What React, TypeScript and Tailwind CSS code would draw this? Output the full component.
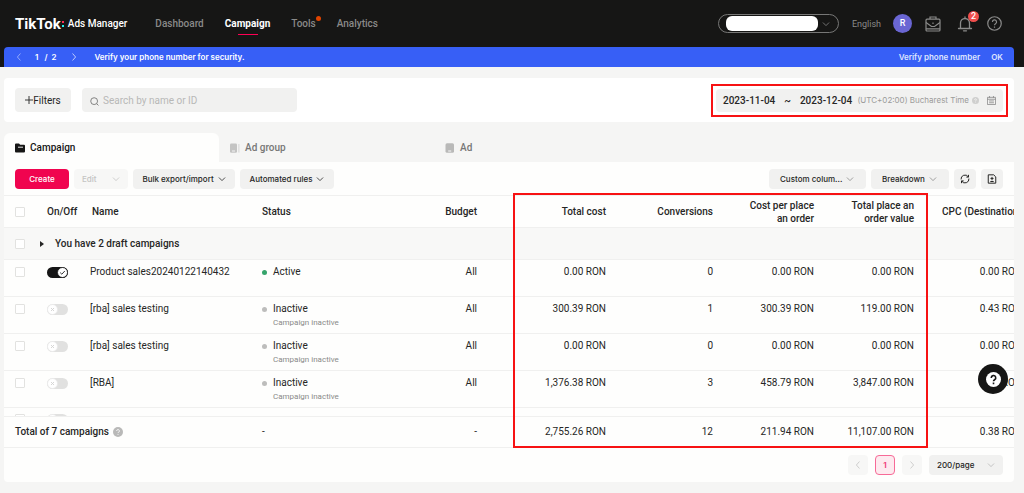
/**
 * Campaign list — the Ads Manager landing view.
 *
 * Top bar, verification banner, filter card, then the tabbed campaign
 * table with its pinned totals row and pagination.
 */

import React, { useState } from "react";

type Campaign = {
  id: number;
  name: string;
  active: boolean;
  values: string[];
};

const NAV = [
  { label: "Dashboard" },
  { label: "Campaign", current: true },
  { label: "Tools", dot: true },
  { label: "Analytics" },
];

// budget, total cost, conversions, cost per order, order value, CPC
const CAMPAIGNS: Campaign[] = [
  {
    id: 1,
    name: "Product sales20240122140432",
    active: true,
    values: ["All", "0.00 RON", "0", "0.00 RON", "0.00 RON", "0.00 RON"],
  },
  {
    id: 2,
    name: "[rba] sales testing",
    active: false,
    values: ["All", "300.39 RON", "1", "300.39 RON", "119.00 RON", "0.43 RON"],
  },
  {
    id: 3,
    name: "[rba] sales testing",
    active: false,
    values: ["All", "0.00 RON", "0", "0.00 RON", "0.00 RON", "0.00 RON"],
  },
  {
    id: 4,
    name: "[RBA]",
    active: false,
    values: ["All", "1,376.38 RON", "3", "458.79 RON", "3,847.00 RON", "0.38 RON"],
  },
];

const TOTALS = ["-", "2,755.26 RON", "12", "211.94 RON", "11,107.00 RON", "0.38 RON"];

function Chevron({ dir = "down", className = "" }: { dir?: "down" | "left" | "right"; className?: string }) {
  const d = { down: "M1.5 3.5 5 7l3.5-3.5", left: "M6.5 1 3 5l3.5 4", right: "M3.5 1 7 5 3.5 9" }[dir];
  return (
    <svg viewBox="0 0 10 10" fill="none" stroke="currentColor" className={`size-2 shrink-0 ${className}`} aria-hidden>
      <path d={d} strokeLinecap="round" strokeLinejoin="round" />
    </svg>
  );
}

function HelpDot({ className = "" }: { className?: string }) {
  return (
    <svg viewBox="0 0 16 16" className={`shrink-0 ${className}`} aria-hidden>
      <circle cx="8" cy="8" r="8" fill="currentColor" />
      <path d="M5.8 6.3a2.2 2.2 0 1 1 3.3 1.9c-.7.4-1.1.7-1.1 1.5M8 11.2v1.3" fill="none" stroke="#fff" strokeWidth="1.4" />
    </svg>
  );
}

function Checkbox({ label }: { label: string }) {
  return (
    <input
      type="checkbox"
      aria-label={label}
      className="block size-2.5 appearance-none rounded-[1px] border border-[#e2e2e0] bg-white checked:bg-[#161616]"
    />
  );
}

function Toggle({ label, initial }: { label: string; initial: boolean }) {
  const [on, setOn] = useState(initial);
  return (
    <label className={`flex h-[11px] w-[21px] items-center rounded-full ${on ? "justify-end bg-[#161616]" : "bg-[#e1e1e0]"}`}>
      <input type="checkbox" className="sr-only" aria-label={label} checked={on} onChange={() => setOn(!on)} />
      <svg viewBox="0 0 11 11" className="size-[11px]" fill="none" aria-hidden>
        <circle cx="5.5" cy="5.5" r="5" fill="#fff" stroke={on ? "#161616" : "#e9e9e8"} strokeWidth="0.8" />
        {on ? (
          <path d="m3.2 5.6 1.6 1.6 3-3.2" stroke="#333" />
        ) : (
          <path d="m4 4 3 3M7 4 4 7" stroke="#d2d2d1" strokeWidth="0.9" />
        )}
      </svg>
    </label>
  );
}

function TopBar() {
  return (
    <header className="flex h-[47px] items-center pr-[22px] pl-[15px] text-[#8a8a89]">
      <div className="flex items-center text-white">
        <span className="text-[15px] leading-4 font-bold">TikTok</span>
        <span className="mr-1 ml-px flex flex-col gap-[2px]">
          <i className="size-[2px] bg-[#fe2c55]" />
          <i className="size-[2px] bg-[#25f4ee]" />
        </span>
        <span className="text-[10px] leading-4 font-medium">Ads Manager</span>
      </div>
      <nav className="ml-7 flex gap-[21px] text-[10px] leading-4 font-medium">
        {NAV.map((n) => (
          <a key={n.label} href="#" className={`relative ${n.current ? "font-bold text-white" : ""}`}>
            {n.label}
            {n.current && <span className="absolute -bottom-[3px] left-1/2 h-px w-5 -translate-x-1/2 bg-[#fe0054]" />}
            {n.dot && <span className="absolute top-0 -right-[5px] size-[5px] rounded-full bg-[#e04400]" />}
          </a>
        ))}
      </nav>

      <div className="ml-auto flex items-center">
        <button className="flex h-[19px] w-[121px] items-center rounded-full border border-[#777776] pl-[7px]" aria-label="Account">
          <span className="h-[15px] w-[92px] rounded-md bg-white" />
          <Chevron className="ml-1" />
        </button>
        <button className="ml-[13px] text-[9px] leading-4">English</button>
        <span className="ml-3 flex size-[19px] items-center justify-center rounded-full bg-[#6a66d3] text-[9px] font-medium text-white">
          R
        </span>
        <button aria-label="Business center" className="ml-[13px]">
          <svg viewBox="0 0 16 16" className="size-4" fill="none" stroke="currentColor" strokeWidth="1.2">
            <rect x="1" y="3.2" width="14" height="11.8" rx="1" />
            <path d="M5 3V1h6v2M1 6.5l5.5 4h3l5.500-4M1 12.800h14M8 6.500v1.500" />
          </svg>
        </button>
        <button aria-label="Notifications" className="relative ml-4">
          <svg viewBox="0 0 16 16" className="size-4" fill="none" stroke="currentColor" strokeWidth="1.3">
            <path d="M1.5 12.5h13M3.5 12.5V7a4.5 4.5 0 0 1 9 0v5.5M8 2.5V1M6.5 14.8h3" strokeLinecap="round" />
          </svg>
          <span className="absolute -top-[5px] -right-[6px] flex size-[11px] items-center justify-center rounded-full bg-[#f04f4d] text-[9px] leading-none font-medium text-white">
            2
          </span>
        </button>
        <button aria-label="Help" className="ml-3.5">
          <svg viewBox="0 0 16 16" className="size-[15px]" fill="none" stroke="currentColor" strokeWidth="1.3">
            <circle cx="8" cy="8" r="7.2" />
            <path d="M5.8 6.4a2.2 2.2 0 1 1 3.3 1.9c-.7.4-1.1.8-1.1 1.6M8 11.2v1.3" />
          </svg>
        </button>
      </div>
    </header>
  );
}

function Banner() {
  return (
    <div className="mr-2.5 ml-1 flex h-5 items-center rounded-t bg-[#375ff6] px-[11px] font-['Inter','Roboto',sans-serif] text-[8px] leading-4 font-semibold text-white">
      <button aria-label="Previous message" className="text-[#a9bafc]">
        <Chevron dir="left" />
      </button>
      <span className="mr-3.5 ml-3 whitespace-pre">1   /  2</span>
      <button aria-label="Next message" className="text-[#dfe6ff]">
        <Chevron dir="right" />
      </button>
      <span className="ml-4">Verify your phone number for security.</span>
      <a href="#" className="ml-auto text-[#dfe6ff]">
        Verify phone number
      </a>
      <button className="ml-[11px] text-[#dfe6ff]">OK</button>
    </div>
  );
}

function FilterBar() {
  return (
    <section className="mt-[11px] flex h-11 items-center rounded bg-white pr-[6px] pl-[11px]">
      <button className="flex h-6 w-14 items-center justify-center rounded-sm bg-[#f1f1f0] text-[10px]">
        <svg viewBox="0 0 8 8" className="size-2" stroke="currentColor" aria-hidden>
          <path d="M4 0v8M0 4h8" strokeWidth="0.9" />
        </svg>
        Filters
      </button>
      <label className="ml-[11px] flex h-6 w-[215px] items-center gap-1 rounded-sm bg-[#f1f1f0] px-2">
        <svg viewBox="0 0 10 10" className="mt-0.5 size-[9px] text-[#777776]" fill="none" stroke="currentColor" aria-hidden>
          <circle cx="4.6" cy="4.6" r="3.8" />
          <path d="m7.4 7.4 2 2" />
        </svg>
        <input
          type="search"
          aria-label="Search"
          placeholder="Search by name or ID"
          className="min-w-0 flex-1 bg-transparent text-[10px] outline-none placeholder:text-[#b8b8b7]"
        />
      </label>

      <div className="ml-auto border-2 border-[#f71213] p-[3px]">
        <button className="flex h-[23px] w-[287px] items-center rounded-sm bg-[#f1f1f0] px-[7px] text-[10px] font-medium">
          <span>2023-11-04</span>
          <span className="mx-[9px]">~</span>
          <span>2023-12-04</span>
          <span className="ml-auto font-['Inter','Roboto',sans-serif] text-[8px] font-normal text-[#9b9b9a]">(UTC+02:00) Bucharest Time</span>
          <HelpDot className="ml-[3px] size-[7px] text-[#cfcfce]" />
          <svg viewBox="0 0 10 10" className="ml-2 size-[9px] text-[#8a8a89]" fill="none" stroke="currentColor" strokeWidth="0.9" aria-hidden>
            <path d="M.5 1.5h9v8h-9zM.5 3.6h9M2.8 0v2M7.2 0v2M2.3 5.5h5.4M2.3 7.5h5.4" />
          </svg>
        </button>
      </div>
    </section>
  );
}

function Tabs() {
  return (
    <div role="tablist" className="mt-[11px] flex h-[29px] text-[10px] font-medium text-[#777776]">
      <button role="tab" aria-selected className="flex w-[215px] items-center gap-[5px] rounded-t-md bg-[#fefefd] pl-[11px] text-[#161616]">
        <svg viewBox="0 0 10 10" className="size-2.5" aria-hidden>
          <path d="M0 1.5Q0 .5 1 .5h3l1.2 1.3H9q1 0 1 1v5.700q0 1-1 1H1q-1 0-1-1z" fill="currentColor" />
          <path d="M3 4.2h5" stroke="#fff" strokeWidth="0.9" />
        </svg>
        Campaign
      </button>
      <button role="tab" className="flex w-[215px] items-center gap-[5px] pl-[11px]">
        <svg viewBox="0 0 10 10" className="size-2.5 text-[#c4c4c3]" fill="currentColor" aria-hidden>
          <rect x="0" y="0.5" width="7" height="9.2" rx="1.3" />
          <path d="M8.4 1h1v8.5h-1z" opacity="0.6" />
          <path d="M2 8h3" stroke="#fff" strokeWidth="0.8" />
        </svg>
        Ad group
      </button>
      <button role="tab" className="flex w-[215px] items-center gap-[5px] pl-[11px]">
        <svg viewBox="0 0 10 10" className="size-2.5 text-[#b9b9b8]" fill="currentColor" aria-hidden>
          <rect x="0.5" y="0.3" width="8.5" height="9.4" rx="1.5" />
          <path d="M3.2 8h3" stroke="#fff" strokeWidth="0.9" />
        </svg>
        Ad
      </button>
    </div>
  );
}

function Toolbar() {
  const button = "flex h-5 items-center whitespace-nowrap rounded-sm bg-[#f1f1f0]";
  return (
    <div className="flex h-[33px] items-center gap-[5px] px-[11px] font-['Inter','Roboto',sans-serif] text-[8px] font-medium">
      <button className="h-5 w-[54px] rounded-sm bg-[#f0044f] text-white">Create</button>
      <button disabled className="flex h-5 w-[54px] items-center justify-between rounded-sm bg-[#f7f7f6] px-2 text-[#c4c4c3]">
        Edit <Chevron />
      </button>
      <button className={`${button} w-[102px] justify-center gap-1`}>
        Bulk export/import <Chevron />
      </button>
      <button className={`${button} w-[94px] justify-center gap-1`}>
        Automated rules <Chevron />
      </button>
      <button className={`${button} ml-auto w-[97px] justify-between pr-3 pl-[11px]`}>
        Custom colum... <Chevron className="text-[#8a8a89]" />
      </button>
      <button className={`${button} w-[78px] justify-between pr-3 pl-[11px]`}>
        Breakdown <Chevron className="text-[#8a8a89]" />
      </button>
      <button aria-label="Refresh" className={`${button} w-[22px] justify-center`}>
        <svg viewBox="0 0 12 12" className="size-2.5" fill="none" stroke="currentColor" strokeWidth="1.2">
          <path d="M1.3 6.5a4.7 4.7 0 0 1 8.6-3.1M10.7 5.5a4.7 4.7 0 0 1-8.6 3.1M10.2 1v2.7H7.6M1.8 11V8.3h2.6" />
        </svg>
      </button>
      <button aria-label="Export" className={`${button} w-[22px] justify-center`}>
        <svg viewBox="0 0 12 12" className="size-2.5" fill="none" stroke="currentColor" strokeWidth="1.2">
          <path d="M1.5 1H8l2.500 2.500V11h-9zM6 3.500v4M4.200 5.300h3.600M4 9h4" />
        </svg>
      </button>
    </div>
  );
}

function CampaignRow({ row }: { row: Campaign }) {
  return (
    <tr className="h-[37px] align-top *:border-b *:border-[#f0f0ef] *:pt-1">
      <td className="pl-[11px]">
        <div className="flex h-4 items-center">
          <Checkbox label={`Select ${row.name}`} />
        </div>
      </td>
      <td className="pl-[7px]">
        <div className="flex h-4 items-center">
          <Toggle label={`Toggle ${row.name}`} initial={row.active} />
        </div>
      </td>
      <td className="pl-1">{row.name}</td>
      <td className="pl-1">
        <div className="flex items-center gap-[6px]">
          <span className={`size-[5px] rounded-full ${row.active ? "bg-[#35a46b]" : "bg-[#bdbdbc]"}`} />
          {row.active ? "Active" : "Inactive"}
        </div>
        {!row.active && <div className="pl-[11px] text-[8px] leading-3 text-[#8a8a89]">Campaign inactive</div>}
      </td>
      {row.values.map((v, i) => (
        <td key={i} className="pr-2 text-right">
          {v}
        </td>
      ))}
    </tr>
  );
}

function CampaignTable() {
  return (
    <div className="relative">
      <div className="h-[253px] overflow-hidden border-t border-[#f0f0ef]">
        <table className="w-[calc(100%+16px)] table-fixed border-separate border-spacing-0 text-[10px] leading-4">
          <colgroup>
            <col className="w-[36px]" />
            <col className="w-[46px]" />
            <col />
            <col className="w-[140px]" />
            <col className="w-[87px]" />
            <col className="w-[129px]" />
            <col className="w-[107px]" />
            <col className="w-[101px]" />
            <col className="w-[100px]" />
            <col className="w-[108px]" />
          </colgroup>
          <thead>
            <tr className="h-8 *:border-b *:border-[#f0f0ef] *:font-medium">
              <th className="pl-[11px]">
                <Checkbox label="Select all" />
              </th>
              <th className="pl-[7px] text-left whitespace-nowrap">On/Off</th>
              <th className="pl-[6px] text-left">Name</th>
              <th className="pl-1 text-left">Status</th>
              <th className="pr-2 text-right">Budget</th>
              <th className="pr-2 text-right">Total cost</th>
              <th className="pr-2 text-right">Conversions</th>
              <th className="pr-2 text-right leading-[13px]">
                Cost per place
                <br />
                an order
              </th>
              <th className="pr-2 text-right leading-[13px]">
                Total place an
                <br />
                order value
              </th>
              <th className="pl-5 text-left whitespace-nowrap">CPC (Destination)</th>
            </tr>
          </thead>
          <tbody>
            <tr className="h-8 bg-[#f8f8f7] *:border-b *:border-[#f0f0ef]">
              <td className="pl-[11px]">
                <Checkbox label="Select drafts" />
              </td>
              <td colSpan={9} className="font-medium">
                <button className="flex items-center gap-[11px]">
                  <svg viewBox="0 0 4 6" className="h-[6px] w-1" fill="currentColor" aria-hidden>
                    <path d="M0 0l4 3-4 3z" />
                  </svg>
                  You have 2 draft campaigns
                </button>
              </td>
            </tr>
            {CAMPAIGNS.map((c) => (
              <CampaignRow key={c.id} row={c} />
            ))}
            {/* next row, only its top edge shows above the totals */}
            <tr className="h-[37px] align-top *:pt-1.5">
              <td className="pl-[11px]">
                <Checkbox label="Select next campaign" />
              </td>
              <td className="pl-[7px]">
                <Toggle label="Toggle next campaign" initial={false} />
              </td>
              <td colSpan={8} />
            </tr>
          </tbody>
          <tfoot className="sticky bottom-0">
            <tr className="h-8 bg-[#fefefd] *:border-y *:border-[#f0f0ef]">
              <td colSpan={3} className="pl-[11px] font-medium">
                <span className="flex items-center gap-1">
                  Total of 7 campaigns <HelpDot className="size-2.5 text-[#b9b9b8]" />
                </span>
              </td>
              <td className="pl-1">-</td>
              {TOTALS.map((v, i) => (
                <td key={i} className="pr-2 text-right">
                  {v}
                </td>
              ))}
            </tr>
          </tfoot>
        </table>
      </div>
      {/* highlight over the performance columns */}
      <div className="pointer-events-none absolute -top-0.5 right-[86px] bottom-0 w-[415px] border-2 border-[#f71213]" />
    </div>
  );
}

function Pagination() {
  return (
    <div className="flex h-[34px] items-center justify-end gap-[7px] pr-[11px] font-['Inter','Roboto',sans-serif] text-[8px] font-medium">
      <button aria-label="Previous page" className="flex size-5 items-center justify-center rounded-sm bg-[#f7f7f6] text-[#c4c4c3]">
        <Chevron dir="left" />
      </button>
      <button className="size-5 rounded-sm border border-[#f76a97] bg-[#fdeaef] font-bold text-[#f0447f]">1</button>
      <button aria-label="Next page" className="flex size-5 items-center justify-center rounded-sm bg-[#f7f7f6] text-[#c4c4c3]">
        <Chevron dir="right" />
      </button>
      <div className="relative flex items-center">
        <select aria-label="Rows per page" className="h-5 w-[74px] appearance-none rounded-sm bg-[#f1f1f0] px-2">
          <option>200/page</option>
        </select>
        <Chevron className="pointer-events-none absolute right-2 text-[#b9b9b8]" />
      </div>
    </div>
  );
}

export default function App() {
  return (
    <div className="relative min-h-screen bg-[#f5f5f4] font-['Roboto','Liberation_Sans',sans-serif] text-[#262625]">
      <div className="bg-[#161615]">
        <TopBar />
        <Banner />
      </div>
      <main className="mr-2.5 ml-1">
        <FilterBar />
        <Tabs />
        <section className="overflow-hidden rounded-b bg-[#fefefd]">
          <Toolbar />
          <CampaignTable />
          <Pagination />
        </section>
      </main>
      <button aria-label="Support" className="fixed right-4 bottom-[99px] flex size-[30px] items-center justify-center rounded-full bg-[#161615]">
        <svg viewBox="0 0 16 16" className="size-[15px]" aria-hidden>
          <circle cx="8" cy="8" r="8" fill="#fff" />
          <path d="M5.6 6.3a2.4 2.4 0 1 1 3.6 2c-.8.5-1.2.8-1.2 1.6M8 11.3V13" fill="none" stroke="#161615" strokeWidth="1.7" />
        </svg>
      </button>
    </div>
  );
}
